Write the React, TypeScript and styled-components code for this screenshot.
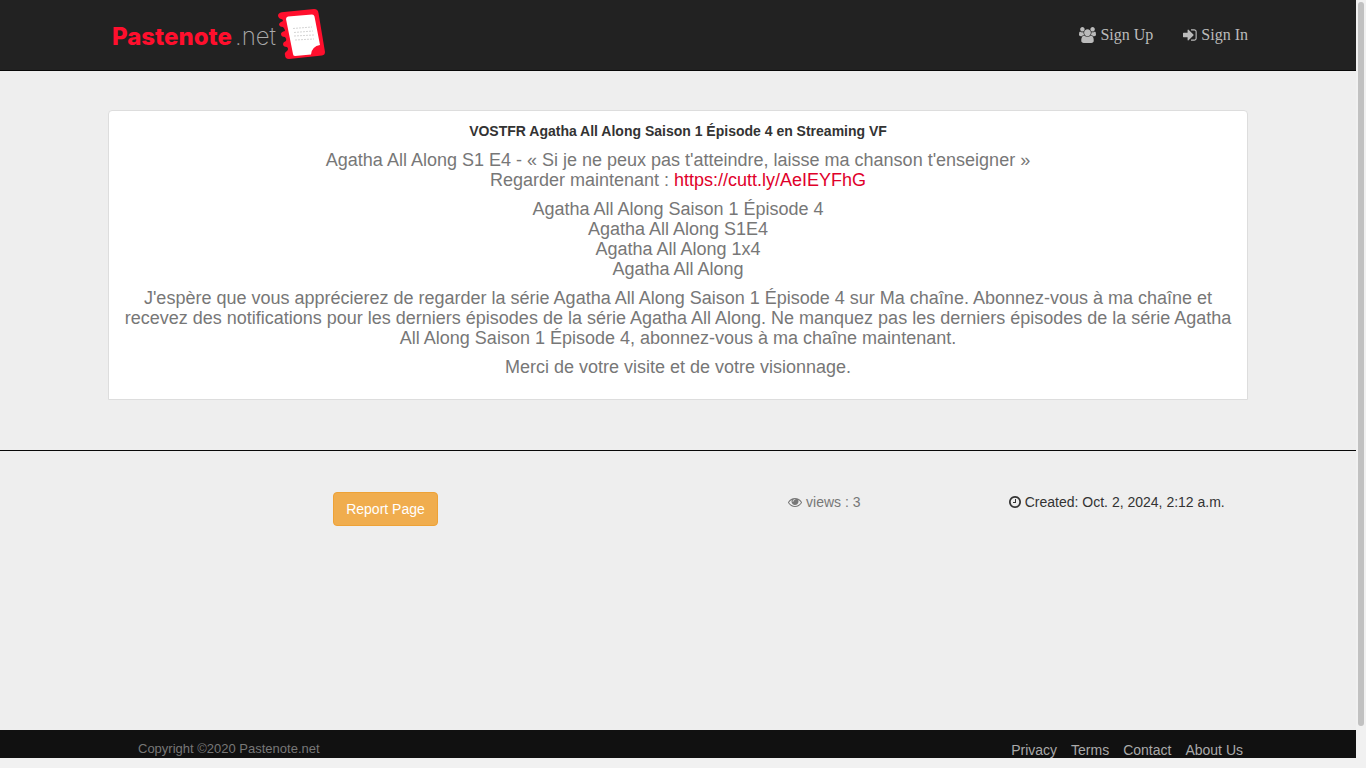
import React from "react";
import styled, { createGlobalStyle } from "styled-components";

const GlobalStyle = createGlobalStyle`
  *, *::before, *::after { box-sizing: border-box; }
  body {
    margin: 0;
    font-family: "Liberation Sans", Arial, sans-serif;
    font-size: 14px;
    line-height: 20px;
    color: #333;
    background: #eee;
  }
  a { text-decoration: none; }
`;

const Shell = styled.div`
  display: grid;
  grid-template-columns: minmax(0, 1fr) 10px;
  grid-template-rows: minmax(0, 1fr) 10px;
  height: 100vh;
  background: #f1f1f1;
`;

const Viewport = styled.div`
  display: flex;
  flex-direction: column;
  overflow: hidden;
  background: #eee;
`;

const VerticalTrack = styled.div`
  padding: 2px;
`;

const Thumb = styled.div`
  height: 96%;
  border-radius: 3px;
  background: #c1c1c1;
`;

const Container = styled.div`
  width: 100%;
  max-width: 1170px;
  margin: 0 auto;
  padding: 0 15px;
`;

const Header = styled.header`
  flex: none;
  background: #222;
  border-bottom: 1px solid #080808;
`;

const HeaderBar = styled(Container)`
  display: flex;
  align-items: center;
  justify-content: space-between;
  height: 70px;
`;

const Brand = styled.a`
  display: block;
  height: 60px;
`;

const Nav = styled.nav`
  display: flex;
  gap: 30px;
  font-family: "Liberation Serif", "Times New Roman", serif;
  font-size: 16px;
`;

const NavLink = styled.a`
  display: flex;
  align-items: center;
  gap: 4px;
  color: #bbb;
`;

const Main = styled.main`
  flex: 1 0 auto;
`;

const Card = styled.article`
  margin: 39px 0 50px;
  padding: 10px 15px 22px;
  text-align: center;
  background: #fff;
  border: 1px solid #ddd;
  border-radius: 4px 4px 0 0;
`;

const Title = styled.h1`
  margin: 0 0 9px;
  font-size: 14px;
  line-height: 20px;
`;

const Body = styled.div`
  display: flex;
  flex-direction: column;
  gap: 9px;
  font-size: 18px;
  line-height: 20px;
  color: #777;
`;

const Paragraph = styled.p`
  margin: 0;
`;

const PasteLink = styled.a`
  color: #e0002a;
`;

const Divider = styled.hr`
  margin: 0;
  border: 0;
  border-top: 1px solid #080808;
`;

const Details = styled.section`
  display: grid;
  grid-template-columns: 2fr 1fr 1fr;
  align-items: start;
  width: 100%;
  max-width: 1170px;
  margin: 41px auto 0;
`;

const Detail = styled.div<{ $muted?: boolean }>`
  display: flex;
  justify-content: center;
  align-items: center;
  gap: 4px;
  color: ${(p) => (p.$muted ? "#777" : "#333")};
`;

const ReportButton = styled.button`
  padding: 6px 12px;
  font: inherit;
  color: #fff;
  background: #f0ad4e;
  border: 1px solid #eea236;
  border-radius: 4px;
  cursor: pointer;
`;

const Footer = styled.footer`
  flex: none;
  height: 28px;
  overflow: hidden;
  background: #111;
`;

const FooterBar = styled(Container)`
  display: flex;
  justify-content: space-between;
  padding: 10px 20px 0 45px;
`;

const Copyright = styled.small`
  font-size: 13px;
  line-height: 18px;
  color: #777;
`;

const FooterLinks = styled.nav`
  display: flex;
  gap: 14px;
`;

const FooterLink = styled.a`
  color: #aaa;
`;

const Glyph = styled.svg`
  display: block;
  flex: none;
  fill: currentColor;
`;

const UsersIcon = () => (
  <Glyph width="17" height="16" viewBox="0 0 1920 1792" aria-hidden="true">
    <path d="M593 896q-162 5-265 128h-134q-82 0-138-40.5t-56-118.5q0-353 124-353 6 0 43.5 21t97.5 42.5 119 21.5q67 0 133-23-5 37-5 66 0 139 81 256zm1071 637q0 120-73 189.5t-194 69.5h-874q-121 0-194-69.5t-73-189.5q0-53 3.5-103.5t14-109 26.5-108.5 43-97.5 62-81 85.5-53.5 111.5-20q10 0 43 21.5t73 48 107 48 135 21.5 135-21.5 107-48 73-48 43-21.5q61 0 111.5 20t85.5 53.5 62 81 43 97.5 26.5 108.5 14 109 3.5 103.5zm-1024-1277q0 106-75 181t-181 75-181-75-75-181 75-181 181-75 181 75 75 181zm704 384q0 159-112.5 271.5t-271.5 112.5-271.5-112.5-112.5-271.5 112.5-271.5 271.5-112.5 271.5 112.5 112.5 271.5zm576 225q0 78-56 118.5t-138 40.5h-134q-103-123-265-128 81-117 81-256 0-29-5-66 66 23 133 23 59 0 119-21.5t97.5-42.5 43.5-21q124 0 124 353zm-128-609q0 106-75 181t-181 75-181-75-75-181 75-181 181-75 181 75 75 181z" />
  </Glyph>
);

const SignInIcon = () => (
  <Glyph width="14" height="16" viewBox="0 0 1568 1792" aria-hidden="true">
    <path d="M1184 896q0 26-19 45l-544 544q-19 19-45 19t-45-19-19-45v-288h-448q-26 0-45-19t-19-45v-384q0-26 19-45t45-19h448v-288q0-26 19-45t45-19 45 19l544 544q19 19 19 45zm352-352v704q0 119-84.5 203.5t-203.5 84.5h-320q-13 0-22.5-9.5t-9.5-22.5q0-4-1-20t-.5-26.5 3-23.5 10-19.5 20.5-6.5h320q66 0 113-47t47-113v-704q0-66-47-113t-113-47h-312l-11.5-1-11.5-3-8-5.5-7-9-2-13.5q0-4-1-20t-.5-26.5 3-23.5 10-19.5 20.5-6.5h320q119 0 203.5 84.5t84.5 203.5z" />
  </Glyph>
);

const EyeIcon = () => (
  <Glyph width="14" height="14" viewBox="0 0 1792 1792" aria-hidden="true">
    <path d="M1664 960q-152-236-381-353 61 104 61 225 0 185-131.5 316.5t-316.5 131.5-316.5-131.5-131.5-316.5q0-121 61-225-229 117-381 353 133 205 333.5 326.5t434.5 121.5 434.5-121.5 333.5-326.5zm-720-384q0-20-14-34t-34-14q-125 0-214.5 89.5t-89.5 214.5q0 20 14 34t34 14 34-14 14-34q0-86 61-147t147-61q20 0 34-14t14-34zm848 384q0 34-20 69-140 230-376.5 368.5t-499.5 138.5-499.5-139-376.5-368q-20-35-20-69t20-69q140-229 376.5-368t499.5-139 499.5 139 376.5 368q20 35 20 69z" />
  </Glyph>
);

const ClockIcon = () => (
  <Glyph width="12" height="14" viewBox="128 0 1536 1792" aria-hidden="true">
    <path d="M1024 544v448q0 14-9 23t-23 9h-320q-14 0-23-9t-9-23v-64q0-14 9-23t23-9h224v-352q0-14 9-23t23-9h64q14 0 23 9t9 23zm416 352q0-148-73-273t-198-198-273-73-273 73-198 198-73 273 73 273 198 198 273 73 273-73 198-198 73-273zm224 0q0 209-103 385.5t-279.5 279.5-385.5 103-385.5-103-279.5-279.5-103-385.5 103-385.5 279.5-279.5 385.5-103 385.5 103 279.5 279.5 103 385.5z" />
  </Glyph>
);

const Logo = () => (
  <svg width="220" height="60" viewBox="0 0 220 60" role="img" aria-label="Pastenote.net">
    <text x="4" y="40" fill="#ff0f2d" fontFamily="Inter, sans-serif" fontSize="24" fontWeight="800">
      Pastenote
    </text>
    <text x="127" y="40" fill="#aaa" fontFamily="Inter, sans-serif" fontSize="24" fontWeight="200">
      .net
    </text>
    <path
      d="M176 7 L206 4 Q210 4 210.500 8 L217 47 Q217 50 214 50.500 L181 54 Q177 54 177 50 Q176 48 179 46 Q181 44 179 42 Q175 42 175 39 Q175 37 178 36 Q179 34 177 32 Q173 32 173 29 Q173 27 177 26 Q177 24 175 22 Q171 22 171 19 Q172 17 175 16 Q175 14 173 14 Q170 13 170 10 Q171 7 176 7Z"
      fill="#ff0f2d"
    />
    <path
      d="M180 11.500 L204 9.500 Q206 9.500 206.500 11.500 L212 40 Q204 41 203 49.500 L187 51 Q185 51 185 49 L178 14 Q178 12 180 11.500Z"
      fill="#fff"
    />
    <g stroke="#d5d5d5" strokeWidth="1" strokeDasharray="2 1">
      <path d="M185 23.500 L204 22" />
      <path d="M186 27.500 L205 26" />
      <path d="M186 31 L206 30" />
      <path d="M187 35 L206 34" />
    </g>
  </svg>
);

const paragraphs: React.ReactNode[][] = [
  [
    "Agatha All Along S1 E4 - « Si je ne peux pas t'atteindre, laisse ma chanson t'enseigner »",
    <>
      Regarder maintenant : <PasteLink href="https://cutt.ly/AeIEYFhG">https://cutt.ly/AeIEYFhG</PasteLink>
    </>,
  ],
  ["Agatha All Along Saison 1 Épisode 4", "Agatha All Along S1E4", "Agatha All Along 1x4", "Agatha All Along"],
  [
    "J'espère que vous apprécierez de regarder la série Agatha All Along Saison 1 Épisode 4 sur Ma chaîne. Abonnez-vous à ma chaîne et recevez des notifications pour les derniers épisodes de la série Agatha All Along. Ne manquez pas les derniers épisodes de la série Agatha All Along Saison 1 Épisode 4, abonnez-vous à ma chaîne maintenant.",
  ],
  ["Merci de votre visite et de votre visionnage."],
];

const footerLinks = ["Privacy", "Terms", "Contact", "About Us"];

export default function App() {
  return (
    <>
      <GlobalStyle />
      <Shell>
        <Viewport>
          <Header>
            <HeaderBar>
              <Brand href="#">
                <Logo />
              </Brand>
              <Nav>
                <NavLink href="#signup">
                  <UsersIcon />
                  Sign Up
                </NavLink>
                <NavLink href="#signin">
                  <SignInIcon />
                  Sign In
                </NavLink>
              </Nav>
            </HeaderBar>
          </Header>
          <Main>
            <Container>
              <Card>
                <Title>VOSTFR Agatha All Along Saison 1 Épisode 4 en Streaming VF</Title>
                <Body>
                  {paragraphs.map((lines, i) => (
                    <Paragraph key={i}>
                      {lines.map((line, j) => (
                        <React.Fragment key={j}>
                          {j > 0 && <br />}
                          {line}
                        </React.Fragment>
                      ))}
                    </Paragraph>
                  ))}
                </Body>
              </Card>
            </Container>
            <Divider />
            <Details>
              <Detail>
                <ReportButton type="button">Report Page</ReportButton>
              </Detail>
              <Detail $muted>
                <EyeIcon />
                views : 3
              </Detail>
              <Detail>
                <ClockIcon />
                Created: Oct. 2, 2024, 2:12 a.m.
              </Detail>
            </Details>
          </Main>
          <Footer>
            <FooterBar>
              <Copyright>Copyright ©2020 Pastenote.net</Copyright>
              <FooterLinks>
                {footerLinks.map((label) => (
                  <FooterLink key={label} href="#">
                    {label}
                  </FooterLink>
                ))}
              </FooterLinks>
            </FooterBar>
          </Footer>
        </Viewport>
        <VerticalTrack>
          <Thumb />
        </VerticalTrack>
      </Shell>
    </>
  );
}
